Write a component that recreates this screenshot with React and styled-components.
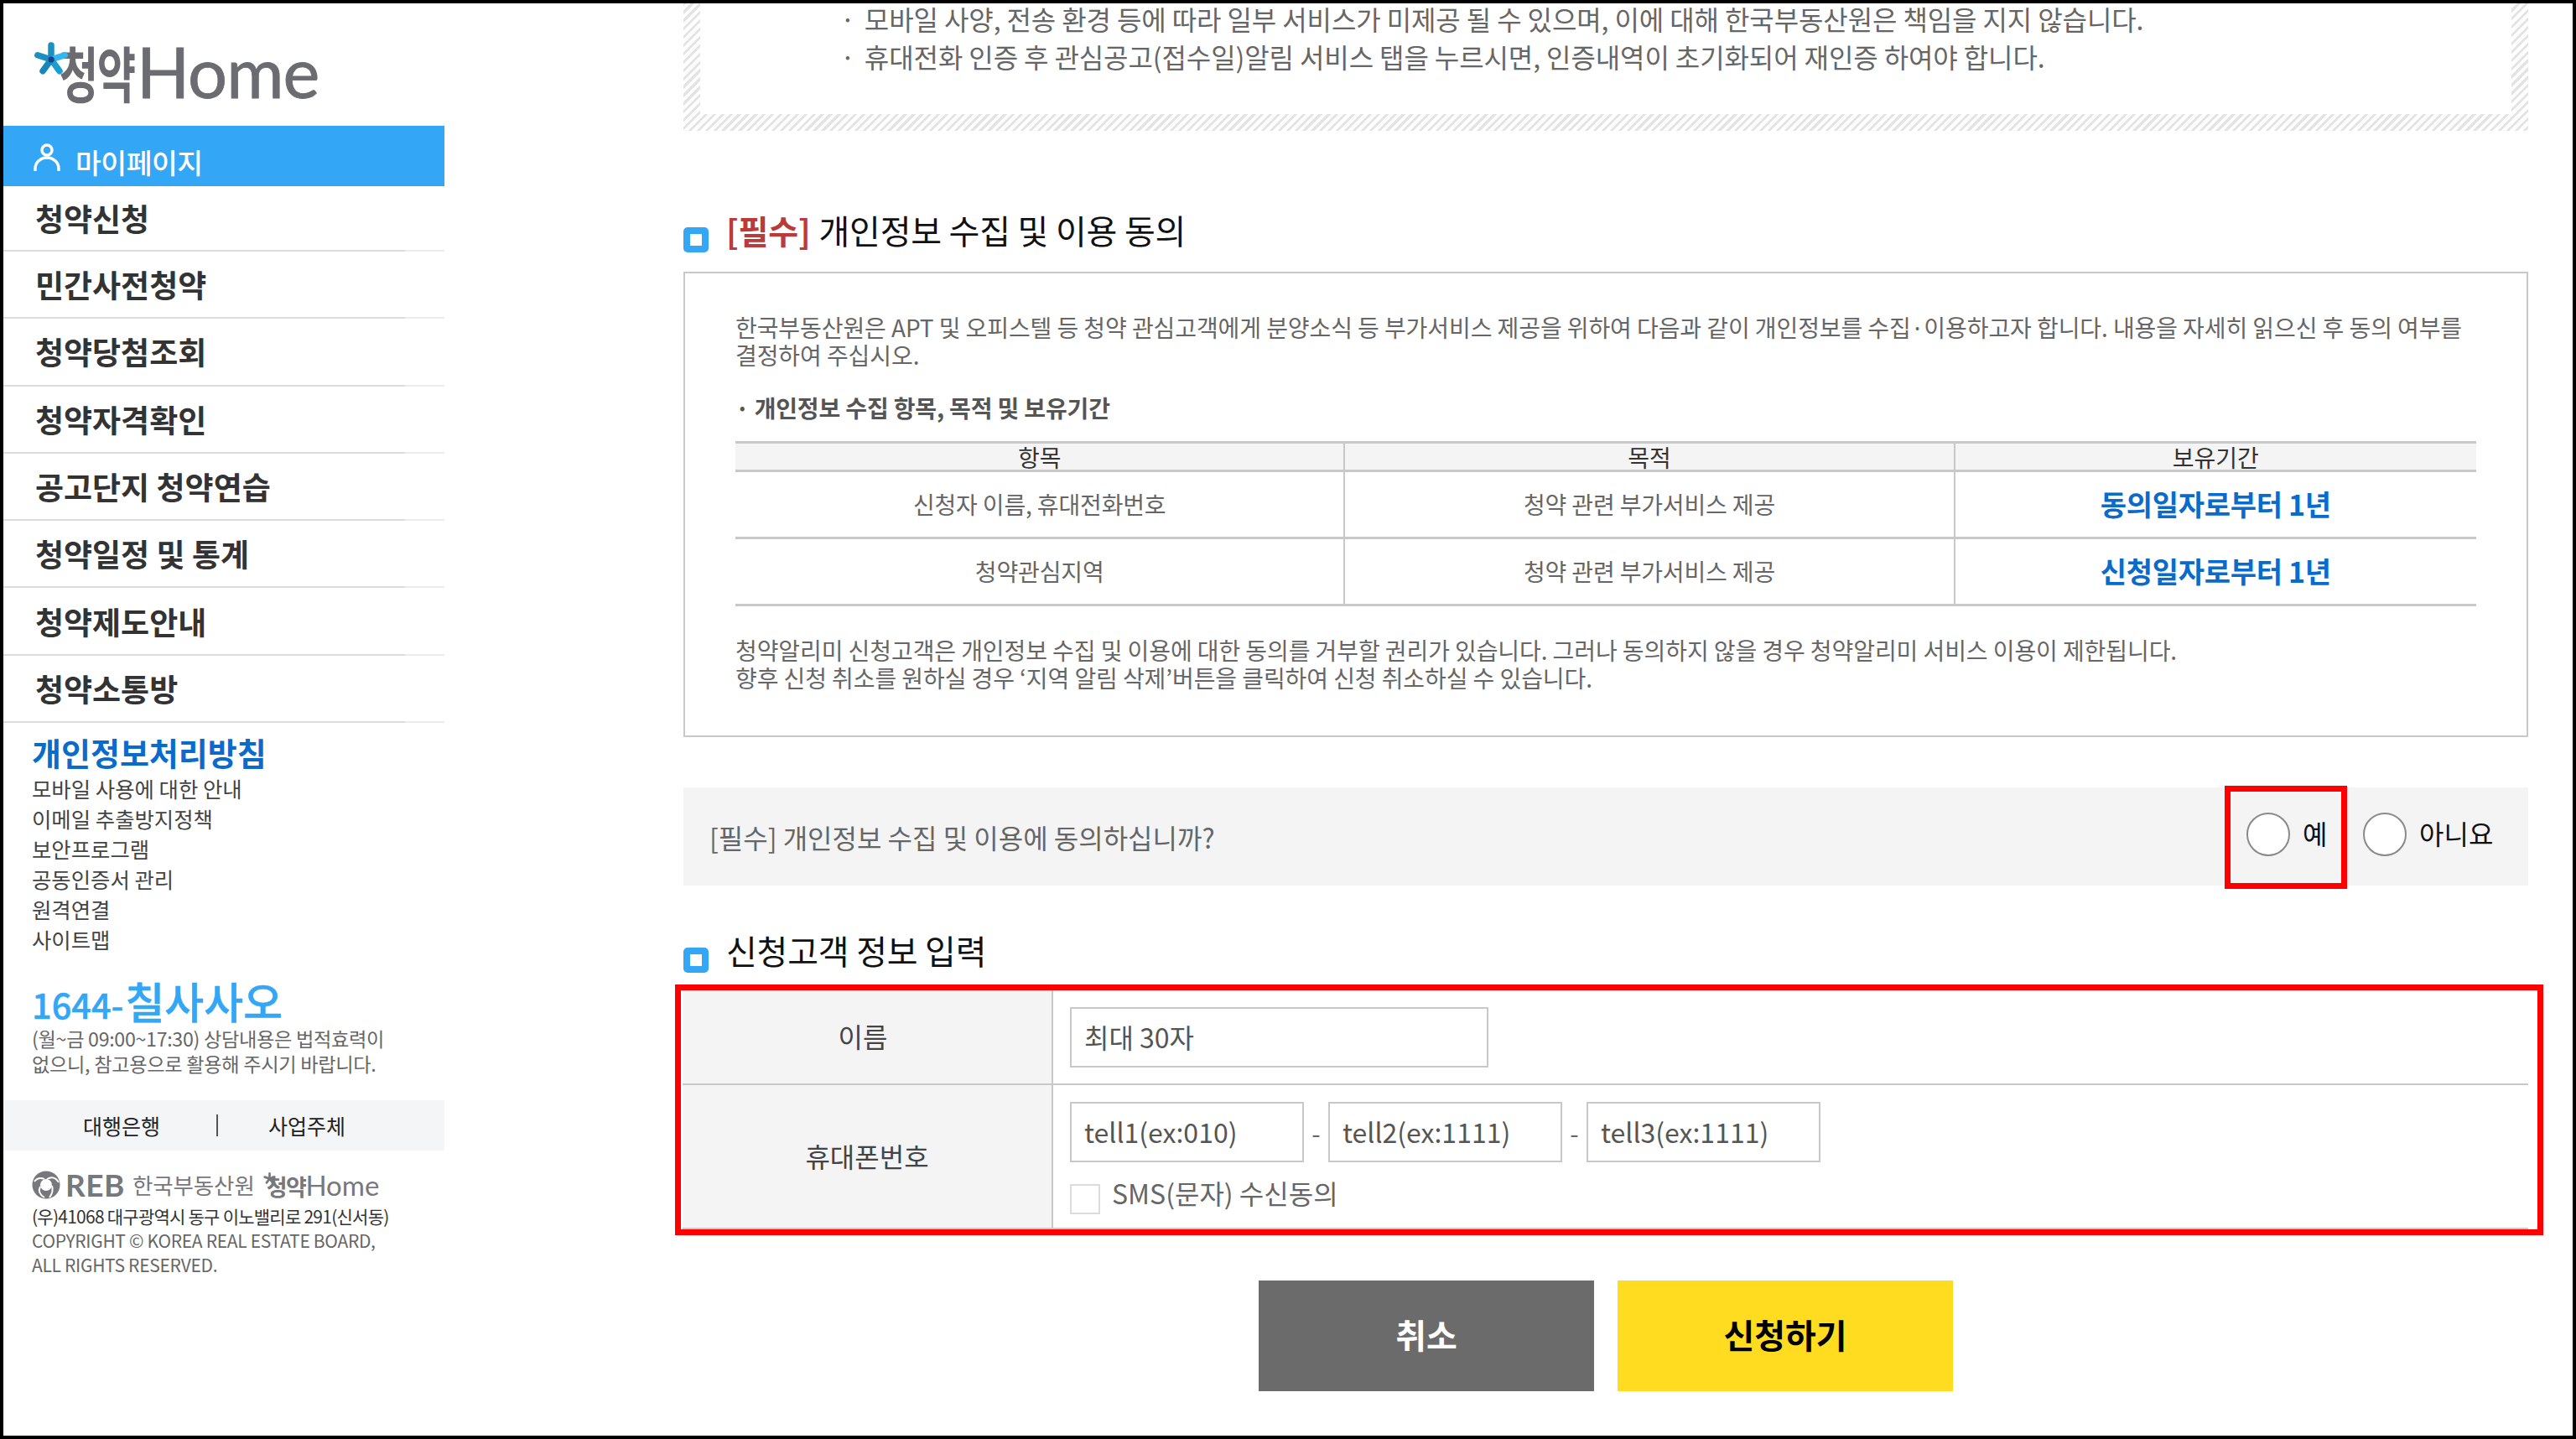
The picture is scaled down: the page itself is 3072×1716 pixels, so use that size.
import styled, { createGlobalStyle } from 'styled-components';

const GlobalStyle = createGlobalStyle`
  html, body {
    margin: 0;
    padding: 0;
    background: #fff;
  }
  * {
    box-sizing: border-box;
  }
  body {
    font-family: "Noto Sans CJK KR", "Noto Sans", sans-serif;
  }
`;

const Frame = styled.div`
  width: 3072px;
  height: 1716px;
  border: 4px solid #000;
  display: flex;
  overflow: hidden;
  background: #fff;
`;

const Sidebar = styled.aside`
  width: 526px;
  flex: none;
`;

const LogoArea = styled.div`
  height: 146px;
  padding: 46px 0 0 36px;
`;

const Logo = styled.div`
  position: relative;
  display: flex;
  align-items: flex-end;
  height: 70px;
  color: #6b6c71;
`;

const Star = styled.svg`
  position: absolute;
  left: 0;
  top: 0;
  width: ${(p) => p.$size}px;
  height: ${(p) => p.$size}px;
`;

const LogoKo = styled.span`
  flex: none;
  width: 123px;
  font-size: 72px;
  font-weight: 700;
  line-height: 70px;
  letter-spacing: -2px;
  transform: scaleX(0.7);
  transform-origin: left center;
  white-space: nowrap;
  padding-left: 44px;
`;

const LogoEn = styled.span`
  font-family: "Lato", sans-serif;
  font-size: 83px;
  font-weight: 400;
  line-height: 70px;
  letter-spacing: -1px;
  -webkit-text-stroke: 0.8px #6b6c71;
`;

const MyPage = styled.a`
  display: flex;
  align-items: flex-end;
  gap: 18px;
  height: 72px;
  padding: 0 0 7px 36px;
  background: #33a6f5;
  color: #fff;
  font-size: 33.5px;
  font-weight: 500;
  line-height: 44px;
  letter-spacing: -0.5px;
`;

const PersonIcon = styled.svg`
  width: 32px;
  height: 34px;
  margin-bottom: 10px;
`;

const NavList = styled.nav`
  display: grid;
  grid-template-rows: 78px repeat(7, 80.3px);
`;

const NavItem = styled.a`
  display: flex;
  align-items: center;
  padding-left: 38px;
  border-bottom: 2px solid;
  border-image: linear-gradient(to right, #dcdcdc 91%, #ececec 91%) 1;
  color: #333;
  font-size: 37px;
  font-weight: 700;
`;

const PolicyTitle = styled.div`
  margin: 16px 0 6px 34px;
  color: #0b6bcb;
  font-size: 38px;
  font-weight: 700;
  line-height: 38px;
`;

const LinkList = styled.ul`
  margin: 0;
  padding: 0 0 0 34px;
  list-style: none;
`;

const LinkItem = styled.li`
  color: #444;
  font-size: 25.4px;
  line-height: 36px;
`;

const Phone = styled.div`
  margin: 29px 0 0 34px;
  display: flex;
  align-items: baseline;
  color: #33a6f5;
  font-size: 41.5px;
  font-weight: 500;
  line-height: 52px;
  -webkit-text-stroke: 0.5px #33a6f5;
`;

const PhoneWord = styled.span`
  font-size: 51px;
  margin-left: 2px;
`;

const HoursNote = styled.p`
  margin: 0 0 0 34px;
  color: #666;
  font-size: 23.2px;
  line-height: 30px;
  letter-spacing: -0.3px;
  white-space: nowrap;
`;

const PartnerBar = styled.div`
  margin-top: 29px;
  height: 60px;
  display: grid;
  grid-template-columns: 254px 2px 270px;
  align-items: center;
  background: #f4f5f7;
  color: #222;
  font-size: 25px;
`;

const PartnerLink = styled.a`
  padding-left: ${(p) => p.$left}px;
`;

const PartnerDivider = styled.span`
  height: 26px;
  background: #555;
`;

const OrgRow = styled.div`
  margin: 26px 0 8px 34px;
  height: 30px;
  display: flex;
  align-items: center;
  color: #77787c;
`;

const OrgMark = styled.svg`
  width: 34px;
  height: 34px;
  flex: none;
`;

const OrgLetters = styled.span`
  margin-left: 6px;
  width: 80px;
  font-family: "Lato", sans-serif;
  font-size: 37px;
  font-weight: 700;
  line-height: 30px;
  letter-spacing: 0.5px;
`;

const OrgName = styled.span`
  font-size: 26.5px;
  line-height: 30px;
  letter-spacing: -0.1px;
`;

const OrgHome = styled.span`
  position: relative;
  margin-left: 10px;
  padding-left: 4px;
  display: flex;
  align-items: baseline;
  height: 30px;
  line-height: 30px;
`;

const OrgHomeKo = styled.span`
  font-size: 27px;
  font-weight: 700;
  letter-spacing: -1.5px;
`;

const OrgHomeEn = styled.span`
  font-family: "Lato", sans-serif;
  font-size: 33px;
`;

const Address = styled.p`
  margin: 0 0 0 34px;
  color: ${(p) => p.$tone};
  font-size: 21px;
  line-height: 29px;
  white-space: nowrap;
  letter-spacing: ${(p) => p.$spacing}px;
`;

const Main = styled.main`
  flex: 1;
  min-width: 0;
  padding: 0 53px 0 285px;
`;

const HatchBox = styled.div`
  height: 153px;
  padding: 0 20px 20px;
  background: repeating-linear-gradient(135deg, #e4e4e4 0 3px, #fff 3px 7px);
`;

const HatchInner = styled.ul`
  height: 100%;
  margin: 0;
  padding: 0 0 0 167px;
  background: #fff;
  list-style: none;
`;

const NoticeLine = styled.li`
  height: 38px;
  margin: -1px 0 8px;
  display: flex;
  gap: 11px;
  color: #666;
  font-size: 32px;
  line-height: 38px;
  letter-spacing: -0.1px;
  white-space: nowrap;
`;

const SectionTitle = styled.h2`
  margin: ${(p) => p.$top}px 0 ${(p) => p.$bottom}px;
  display: flex;
  align-items: flex-start;
  gap: 21px;
  color: #111;
  font-size: 40px;
  font-weight: 400;
  line-height: 39px;
  letter-spacing: -0.2px;
`;

const TitleMark = styled.i`
  flex: none;
  width: 30px;
  height: 30px;
  margin-top: 16px;
  border: 8px solid #33a6f5;
  border-radius: 5px;
  background: #fff;
`;

const Required = styled.b`
  color: #bb3a3a;
  font-size: 39px;
  font-weight: 700;
  margin-right: 10px;
`;

const TermsBox = styled.div`
  height: 555px;
  padding: 48px 60px 0;
  border: 2px solid #c8c8c8;
`;

const TermsText = styled.p`
  margin: ${(p) => p.$top || 0}px 0 0;
  color: #666;
  font-size: 28px;
  line-height: 33px;
  letter-spacing: -0.08px;
  white-space: nowrap;
`;

const TermsSub = styled.p`
  margin: 30px 0 23px;
  color: #555;
  font-size: 28px;
  font-weight: 700;
  line-height: 33px;
  letter-spacing: -0.15px;
`;

const TermsTable = styled.table`
  width: 100%;
  border-collapse: collapse;
  table-layout: fixed;
  border-top: 3px solid #c8c8c8;
`;

const Col = styled.col`
  width: ${(p) => p.$width}px;
`;

const Th = styled.th`
  height: 34px;
  padding: 0;
  background: #f4f4f4;
  border-left: 2px solid #c8c8c8;
  border-bottom: 3px solid #c8c8c8;
  color: #333;
  font-size: 28px;
  font-weight: 400;
  line-height: 30px;
  &:first-child {
    border-left: 0;
  }
`;

const Td = styled.td`
  height: 80px;
  padding: 0 0 2px;
  text-align: center;
  border-left: 2px solid #c8c8c8;
  border-bottom: 3px solid #c8c8c8;
  color: #666;
  font-size: 28px;
  letter-spacing: -0.15px;
  &:first-child {
    border-left: 0;
  }
`;

const Period = styled(Td)`
  color: #0b6bcb;
  font-size: 34px;
  font-weight: 700;
  letter-spacing: -0.3px;
`;

const ConsentBar = styled.div`
  margin-top: 60px;
  height: 117px;
  display: flex;
  align-items: center;
  padding-left: 31px;
  background: #f4f4f4;
  color: #666;
  font-size: 32px;
`;

const ConsentText = styled.span`
  flex: 1;
`;

const YesOption = styled.label`
  align-self: stretch;
  width: 146px;
  margin: -2px 19px -4px 0;
  padding: 25px 0 0 19px;
  border: 7px solid #f00;
  display: flex;
  align-items: flex-start;
  gap: 15px;
  color: #111;
  line-height: 48px;
`;

const NoOption = styled.label`
  display: flex;
  align-items: flex-start;
  gap: 15px;
  width: 197px;
  align-self: stretch;
  padding-top: 30px;
  color: #111;
  line-height: 48px;
`;

const RadioDot = styled.span`
  flex: none;
  width: 52px;
  height: 52px;
  border-radius: 50%;
  border: 2px solid #8a8a8a;
  background: #fff;
`;

const FormFrame = styled.div`
  margin: 0 -18px 0 -10px;
  height: 299px;
  border: 7px solid #f00;
  padding: 0 11px 0 2px;
`;

const FormGrid = styled.div`
  height: 100%;
  display: grid;
  grid-template-columns: 442px 1fr;
  grid-template-rows: 113px 1fr;
  border-bottom: 2px solid #c8c8c8;
`;

const LabelCell = styled.div`
  display: flex;
  align-items: center;
  justify-content: center;
  padding: 0 ${(p) => p.$shift || 0}px 3px 0;
  background: #f4f4f4;
  border-right: 2px solid #c8c8c8;
  border-bottom: ${(p) => (p.$last ? 0 : '2px solid #c8c8c8')};
  color: #444;
  font-size: 32px;
`;

const FieldCell = styled.div`
  padding: 20px 0 0 20px;
  border-bottom: ${(p) => (p.$last ? 0 : '2px solid #c8c8c8')};
`;

const TextInput = styled.input`
  display: block;
  width: ${(p) => p.$width}px;
  height: 72px;
  padding: 0 15px 3px;
  border: 2px solid #c8c8c8;
  border-radius: 0;
  background: #fff;
  font-family: inherit;
  font-size: 32px;
  &::placeholder {
    color: #555;
    opacity: 1;
  }
`;

const PhoneRow = styled.div`
  display: flex;
  align-items: center;
`;

const Dash = styled.span`
  width: 29px;
  text-align: center;
  color: #666;
  font-size: 30px;
`;

const SmsRow = styled.label`
  margin-top: 26px;
  display: flex;
  align-items: flex-start;
  gap: 14px;
  color: #666;
  font-size: 32px;
  line-height: 20px;
`;

const CheckBox = styled.span`
  width: 36px;
  height: 36px;
  border: 2px solid #dcdcdc;
  background: #fff;
`;

const ButtonRow = styled.div`
  margin-top: 54px;
  display: flex;
  justify-content: center;
  gap: 28px;
`;

const ActionButton = styled.button`
  width: 400px;
  height: 132px;
  padding: 0 0 4px;
  border: 0;
  background: ${(p) => (p.$primary ? '#ffdc20' : '#6b6b6b')};
  color: ${(p) => (p.$primary ? '#000' : '#fff')};
  font-family: inherit;
  font-size: 40px;
  font-weight: 700;
`;

const navItems = ['청약신청', '민간사전청약', '청약당첨조회', '청약자격확인', '공고단지 청약연습', '청약일정 및 통계', '청약제도안내', '청약소통방'];
const policyLinks = ['모바일 사용에 대한 안내', '이메일 추출방지정책', '보안프로그램', '공동인증서 관리', '원격연결', '사이트맵'];

const colourPetals = ['#1a8fc4', '#35b5ee', '#1a9ed0', '#1687b8', '#1a8fc0'];
const greyPetals = ['#77787c', '#77787c', '#77787c', '#77787c', '#77787c'];

function LogoStar({ size, colours, core }) {
  return (
    <Star $size={size} viewBox="0 0 42 42">
      {colours.map((colour, i) => (
        <line key={i} x1="21" y1="21" x2="21" y2="4" stroke={colour} strokeWidth="7.5" strokeLinecap="round" transform={`rotate(${i * 72} 21 21)`} />
      ))}
      <circle cx="21" cy="21" r="3.5" fill={core} />
    </Star>
  );
}

export default function App() {
  return (
    <Frame>
      <GlobalStyle />
      <Sidebar>
        <LogoArea>
          <Logo>
            <LogoKo>청약</LogoKo>
            <LogoStar size={42} colours={colourPetals} core="#1c3f8f" />
            <LogoEn>Home</LogoEn>
          </Logo>
        </LogoArea>
        <MyPage>
          <PersonIcon viewBox="0 0 32 34" fill="none" stroke="#fff" strokeWidth="3.4">
            <circle cx="16" cy="8" r="6" />
            <path d="M2 33v-3a14 13 0 0 1 28 0v3" />
          </PersonIcon>
          마이페이지
        </MyPage>
        <NavList>
          {navItems.map((item) => (
            <NavItem key={item}>{item}</NavItem>
          ))}
        </NavList>
        <PolicyTitle>개인정보처리방침</PolicyTitle>
        <LinkList>
          {policyLinks.map((item) => (
            <LinkItem key={item}>{item}</LinkItem>
          ))}
        </LinkList>
        <Phone>
          1644-<PhoneWord>칠사사오</PhoneWord>
        </Phone>
        <HoursNote>(월~금 09:00~17:30) 상담내용은 법적효력이</HoursNote>
        <HoursNote>없으니, 참고용으로 활용해 주시기 바랍니다.</HoursNote>
        <PartnerBar>
          <PartnerLink $left={95}>대행은행</PartnerLink>
          <PartnerDivider />
          <PartnerLink $left={60}>사업주체</PartnerLink>
        </PartnerBar>
        <OrgRow>
          <OrgMark viewBox="0 0 34 34">
            <circle cx="17" cy="17" r="16.5" fill="#77787c" />
            <circle cx="17" cy="17" r="7" fill="#fff" />
            <path d="M18 10C25 6 29 9 32 14M10 19C7 25 10 29 15 32M24 18C26 24 24 28 21 32M15 10C10 8 6 9 3 13" fill="none" stroke="#fff" strokeWidth="2" />
          </OrgMark>
          <OrgLetters>REB</OrgLetters>
          <OrgName>한국부동산원</OrgName>
          <OrgHome>
            <OrgHomeKo>청약</OrgHomeKo>
            <LogoStar size={15} colours={greyPetals} core="#77787c" />
            <OrgHomeEn>Home</OrgHomeEn>
          </OrgHome>
        </OrgRow>
        <Address $tone="#333" $spacing={-0.75}>(우)41068 대구광역시 동구 이노밸리로 291(신서동)</Address>
        <Address $tone="#666" $spacing={-0.3}>COPYRIGHT © KOREA REAL ESTATE BOARD,</Address>
        <Address $tone="#666" $spacing={-0.3}>ALL RIGHTS RESERVED.</Address>
      </Sidebar>
      <Main>
        <HatchBox>
          <HatchInner>
            <NoticeLine>
              <span>·</span>
              <span>모바일 사양, 전송 환경 등에 따라 일부 서비스가 미제공 될 수 있으며, 이에 대해 한국부동산원은 책임을 지지 않습니다.</span>
            </NoticeLine>
            <NoticeLine>
              <span>·</span>
              <span>휴대전화 인증 후 관심공고(접수일)알림 서비스 탭을 누르시면, 인증내역이 초기화되어 재인증 하여야 합니다.</span>
            </NoticeLine>
          </HatchInner>
        </HatchBox>
        <SectionTitle $top={99} $bottom={23}>
          <TitleMark />
          <span>
            <Required>[필수]</Required>개인정보 수집 및 이용 동의
          </span>
        </SectionTitle>
        <TermsBox>
          <TermsText>
            한국부동산원은 APT 및 오피스텔 등 청약 관심고객에게 분양소식 등 부가서비스 제공을 위하여 다음과 같이 개인정보를 수집·이용하고자 합니다. 내용을 자세히 읽으신 후 동의 여부를
            <br />
            결정하여 주십시오.
          </TermsText>
          <TermsSub>· 개인정보 수집 항목, 목적 및 보유기간</TermsSub>
          <TermsTable>
            <colgroup>
              <Col $width={726} />
              <Col $width={727} />
              <Col $width={622} />
            </colgroup>
            <thead>
              <tr>
                <Th>항목</Th>
                <Th>목적</Th>
                <Th>보유기간</Th>
              </tr>
            </thead>
            <tbody>
              <tr>
                <Td>신청자 이름, 휴대전화번호</Td>
                <Td>청약 관련 부가서비스 제공</Td>
                <Period>동의일자로부터 1년</Period>
              </tr>
              <tr>
                <Td>청약관심지역</Td>
                <Td>청약 관련 부가서비스 제공</Td>
                <Period>신청일자로부터 1년</Period>
              </tr>
            </tbody>
          </TermsTable>
          <TermsText $top={36}>
            청약알리미 신청고객은 개인정보 수집 및 이용에 대한 동의를 거부할 권리가 있습니다. 그러나 동의하지 않을 경우 청약알리미 서비스 이용이 제한됩니다.
            <br />
            향후 신청 취소를 원하실 경우 ‘지역 알림 삭제’버튼을 클릭하여 신청 취소하실 수 있습니다.
          </TermsText>
        </TermsBox>
        <ConsentBar>
          <ConsentText>[필수] 개인정보 수집 및 이용에 동의하십니까?</ConsentText>
          <YesOption>
            <RadioDot />예
          </YesOption>
          <NoOption>
            <RadioDot />아니요
          </NoOption>
        </ConsentBar>
        <SectionTitle $top={58} $bottom={14}>
          <TitleMark />
          <span>신청고객 정보 입력</span>
        </SectionTitle>
        <FormFrame>
          <FormGrid>
            <LabelCell $shift={10}>이름</LabelCell>
            <FieldCell>
              <TextInput $width={499} placeholder="최대 30자" />
            </FieldCell>
            <LabelCell $last>휴대폰번호</LabelCell>
            <FieldCell $last>
              <PhoneRow>
                <TextInput $width={279} placeholder="tell1(ex:010)" />
                <Dash>-</Dash>
                <TextInput $width={279} placeholder="tell2(ex:1111)" />
                <Dash>-</Dash>
                <TextInput $width={279} placeholder="tell3(ex:1111)" />
              </PhoneRow>
              <SmsRow>
                <CheckBox />
                SMS(문자) 수신동의
              </SmsRow>
            </FieldCell>
          </FormGrid>
        </FormFrame>
        <ButtonRow>
          <ActionButton>취소</ActionButton>
          <ActionButton $primary>신청하기</ActionButton>
        </ButtonRow>
      </Main>
    </Frame>
  );
}
